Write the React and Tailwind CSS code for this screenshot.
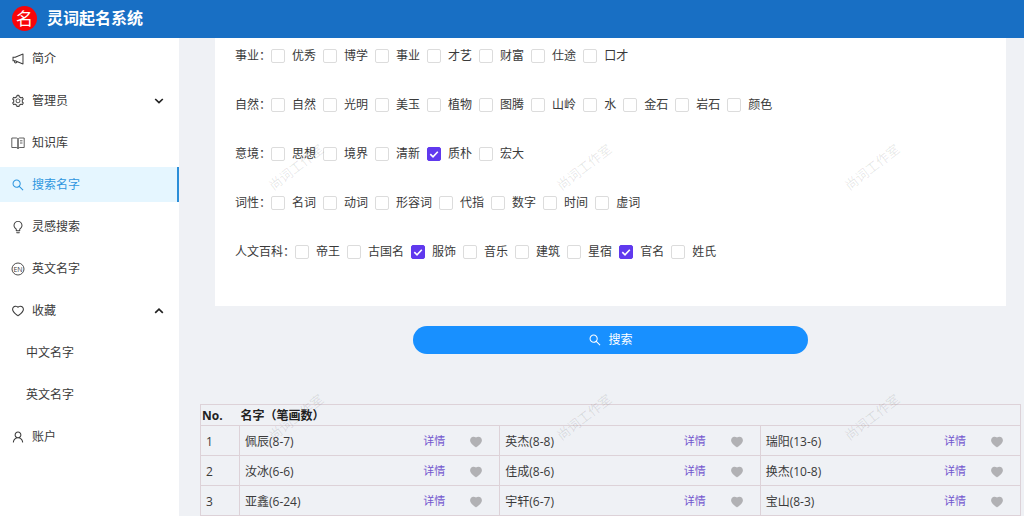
import {
  AiOutlineNotification,
  AiOutlineSetting,
  AiOutlineSearch,
  AiOutlineBulb,
  AiOutlineHeart,
  AiOutlineUser,
  AiFillHeart,
} from "react-icons/ai";

function EnglishIcon() {
  return (
    <svg viewBox="0 0 28 28" className="size-[14px] shrink-0" aria-hidden="true">
      <circle cx="14" cy="14" r="12" fill="none" stroke="currentColor" strokeWidth="1.8" />
      <text x="14" y="19" fontSize="14" fontWeight="500" textAnchor="middle" fill="currentColor">
        EN
      </text>
    </svg>
  );
}

function BookIcon() {
  return (
    <svg
      viewBox="0 0 14 14"
      className="size-[14px] shrink-0"
      fill="none"
      stroke="currentColor"
      strokeWidth="0.8"
      aria-hidden="true"
    >
      <path d="M.8 2h4.4C6.300 2 7 2.600 7 3.500V12.600C6.700 11.900 6 11.500 5.200 11.500H.8zM13.200 2H8.800C7.700 2 7 2.600 7 3.500V12.600C7.300 11.900 8 11.500 8.800 11.500h4.400zM9 4.800h2.500M9 7h2.500" />
    </svg>
  );
}

function Chevron({ up }) {
  return (
    <svg viewBox="0 0 10 10" className="size-[10px]" fill="none" stroke="#222" strokeWidth="1.7" aria-hidden="true">
      <path d={up ? "M1.2 6.8 5 3.2l3.8 3.6" : "M1.2 3 5 6.6 8.8 3"} />
    </svg>
  );
}

function MenuItem({ icon: Icon, label, active, chevron }) {
  return (
    <a
      href="#"
      aria-current={active ? "page" : undefined}
      className={
        "flex h-[35px] items-center gap-[7px] pl-[11px] pr-[15px] " +
        (active ? "border-r-2 border-[#2b8ed8] bg-[#e5f6ff] text-[#2f97e0]" : "text-[#3a3a3a]")
      }
    >
      <Icon className="size-[14px] shrink-0" />
      <span className="flex-1">{label}</span>
      {chevron && <Chevron up={chevron === "up"} />}
    </a>
  );
}

function SubItem({ label }) {
  return (
    <a href="#" className="flex h-[35px] items-center pl-[26px] text-[#3a3a3a]">
      {label}
    </a>
  );
}

const filters = [
  { id: "career", name: "事业", options: ["优秀", "博学", "事业", "才艺", "财富", "仕途", "口才"] },
  {
    id: "nature",
    name: "自然",
    options: ["自然", "光明", "美玉", "植物", "图腾", "山岭", "水", "金石", "岩石", "颜色"],
  },
  { id: "mood", name: "意境", options: ["思想", "境界", "清新", "质朴", "宏大"], checked: ["质朴"] },
  { id: "word", name: "词性", options: ["名词", "动词", "形容词", "代指", "数字", "时间", "虚词"] },
  {
    id: "culture",
    name: "人文百科",
    options: ["帝王", "古国名", "服饰", "音乐", "建筑", "星宿", "官名", "姓氏"],
    checked: ["服饰", "官名"],
  },
];

function Option({ label, checked }) {
  return (
    <label className="flex items-center gap-[7px]">
      <span className="grid size-[14px]">
        <input
          type="checkbox"
          defaultChecked={checked}
          className="peer col-start-1 row-start-1 size-[14px] appearance-none rounded-[2px] border border-[#dcdcdc] bg-white checked:border-[#6039ee] checked:bg-[#6039ee]"
        />
        <svg
          viewBox="0 0 14 14"
          className="pointer-events-none invisible col-start-1 row-start-1 size-[14px] peer-checked:visible"
          fill="none"
          stroke="white"
          strokeWidth="1.6"
          aria-hidden="true"
        >
          <path d="M3.3 7.2 6 9.8l4.8-5" />
        </svg>
      </span>
      {label}
    </label>
  );
}

function FilterRow({ id, name, options, checked = [] }) {
  return (
    <div role="group" aria-labelledby={id} className="flex h-[21px] items-center">
      <span id={id}>{name}：</span>
      <div className="flex gap-[7px]">
        {options.map((o) => (
          <Option key={o} label={o} checked={checked.includes(o)} />
        ))}
      </div>
    </div>
  );
}

const rows = [
  ["佩辰(8-7)", "英杰(8-8)", "瑞阳(13-6)"],
  ["汝冰(6-6)", "佳成(8-6)", "换杰(10-8)"],
  ["亚鑫(6-24)", "宇轩(6-7)", "宝山(8-3)"],
];

function NameCell({ name }) {
  return (
    <td className="border border-[#ddd2d8] pl-[5px] pr-4 pt-[2px]">
      <div className="flex items-center">
        <span className="flex-1">{name}</span>
        <a href="#" className="mr-6 text-[11px] text-[#7357cf]">
          详情
        </a>
        <button type="button" aria-label="收藏" className="text-[#b1b1b4]">
          <AiFillHeart className="size-[14px]" />
        </button>
      </div>
    </td>
  );
}

const watermarks = [0, 1, 2, 3, 4, 5];

export default function App() {
  return (
    <div className="relative flex min-h-screen flex-col overflow-hidden bg-[#eff1f5] font-['Open_Sans','Noto_Sans_CJK_SC',sans-serif] text-xs text-[#3a3a3a]">
      <header className="flex h-[38px] items-center gap-[10px] bg-[#186fc4] pb-[2px] pl-3 text-white">
        <span className="flex size-[25px] items-center justify-center rounded-full bg-[#f90509] text-[17px] leading-none">
          名
        </span>
        <h1 className="text-base font-bold">灵词起名系统</h1>
      </header>

      <div className="flex flex-1">
        <nav className="flex w-[179px] shrink-0 flex-col gap-[7px] bg-white pt-[3px]">
          <MenuItem icon={AiOutlineNotification} label="简介" />
          <MenuItem icon={AiOutlineSetting} label="管理员" chevron="down" />
          <MenuItem icon={BookIcon} label="知识库" />
          <MenuItem icon={AiOutlineSearch} label="搜索名字" active />
          <MenuItem icon={AiOutlineBulb} label="灵感搜索" />
          <MenuItem icon={EnglishIcon} label="英文名字" />
          <MenuItem icon={AiOutlineHeart} label="收藏" chevron="up" />
          <SubItem label="中文名字" />
          <SubItem label="英文名字" />
          <MenuItem icon={AiOutlineUser} label="账户" />
        </nav>

        <main className="min-w-0 flex-1 pl-[21px] pr-[3px]">
          <form className="mx-[15px]" onSubmit={(e) => e.preventDefault()}>
            <div className="flex flex-col gap-7 bg-white pb-[44px] pl-5 pt-[7px]">
              {filters.map((f) => (
                <FilterRow key={f.id} {...f} />
              ))}
            </div>
            <button
              type="submit"
              className="mx-auto mt-5 flex h-7 w-1/2 items-center justify-center gap-[6px] rounded-full bg-[#1890ff] text-white"
            >
              <AiOutlineSearch className="size-[14px]" />
              搜索
            </button>
          </form>

          <table className="mt-[50px] w-full table-fixed border-collapse border border-[#ddd2d8]">
            <colgroup>
              <col className="w-[39px]" />
              <col />
              <col />
              <col />
            </colgroup>
            <thead>
              <tr className="h-[21px] text-left text-[#222]">
                <th className="pl-px pt-[2px] font-bold">No.</th>
                <th className="pl-px pt-[2px] font-bold" colSpan={3}>
                  名字（笔画数）
                </th>
              </tr>
            </thead>
            <tbody>
              {rows.map((names, i) => (
                <tr key={names[0]} className="h-[30px]">
                  <td className="border border-[#ddd2d8] pl-[5px] pt-[2px]">{i + 1}</td>
                  {names.map((n) => (
                    <NameCell key={n} name={n} />
                  ))}
                </tr>
              ))}
            </tbody>
          </table>
        </main>
      </div>

      <div
        aria-hidden="true"
        className="pointer-events-none absolute left-[153px] top-[43px] grid auto-rows-[250px] grid-cols-[repeat(3,288px)] place-items-center text-[13px] text-black/10"
      >
        {watermarks.map((w) => (
          <span key={w} className="-rotate-[38deg]">
            尚词工作室
          </span>
        ))}
      </div>
    </div>
  );
}
